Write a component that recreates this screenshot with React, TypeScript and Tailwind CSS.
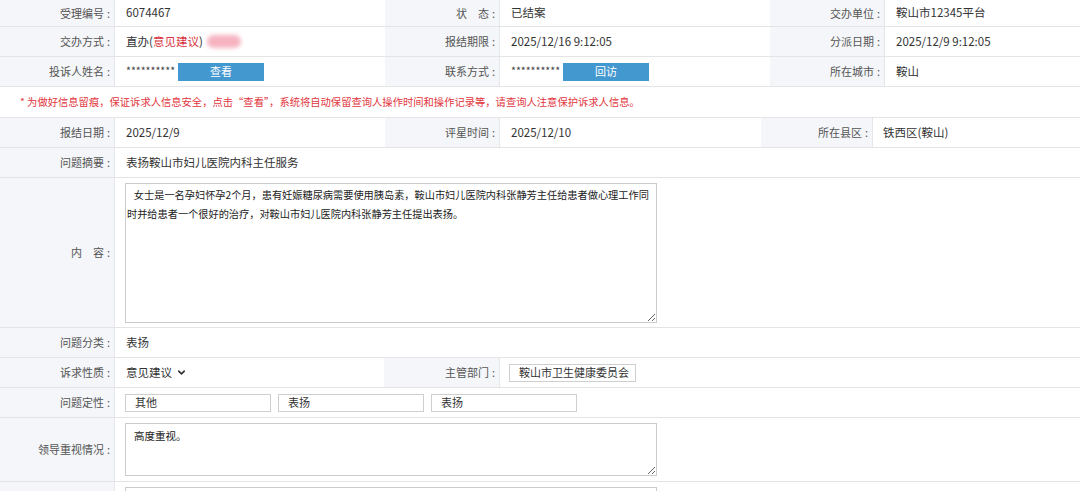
import { ChevronDown } from 'lucide-react'
import type { ReactNode } from 'react'

function Label({ children, w = 'w-[115px]' }: { children?: ReactNode; w?: string }) {
  return (
    <div className={`${w} shrink-0 self-stretch flex items-center justify-end pr-[4px] bg-[#f4f6f9] border-r border-[#e3e6eb] text-[#555] text-[11px]`}>
      {children}
      {children && <span className="ml-[3px]">:</span>}
    </div>
  )
}

function Value({ children, w = 'w-[270px]', pl = 'pl-[11px]' }: { children?: ReactNode; w?: string; pl?: string }) {
  return <div className={`${w} shrink-0 self-stretch flex items-center ${pl} text-[#333]`}>{children}</div>
}

function Row({ children, h = 'h-[30px]' }: { children: ReactNode; h?: string }) {
  return <div className={`flex ${h} border-b border-[#e4e4e4]`}>{children}</div>
}

function Masked() {
  return <span className="inline-block w-[47px] text-[10.5px] text-[#444]">**********</span>
}

function BlueButton({ children }: { children: ReactNode }) {
  return (
    <span className="ml-[5px] inline-flex w-[86px] h-[18px] items-center justify-center bg-[#4398cf] text-white text-[11px]">
      {children}
    </span>
  )
}

function TextInput({ value, w = 'w-[146px]' }: { value: string; w?: string }) {
  return (
    <div className={`${w} h-[18px] border border-[#cfcfcf] bg-white flex items-center pl-[9px] text-[#333] text-[11px]`}>
      {value}
    </div>
  )
}

export default function App() {
  return (
    <div className="w-[1080px] h-[491px] overflow-hidden bg-white font-['Noto_Sans_CJK_SC',sans-serif] text-[11.5px] leading-none">
      <Row h="h-[27px]">
        <Label>受理编号</Label>
        <Value>6074467</Value>
        <Label>状　态</Label>
        <Value>已结案</Value>
        <Label>交办单位</Label>
        <Value w="flex-1">鞍山市12345平台</Value>
      </Row>
      <Row>
        <Label>交办方式</Label>
        <Value>
          直办(<span className="text-[#d8333c]">意见建议</span>)
          <span className="ml-[4px] inline-block w-[34px] h-[13px] rounded-full bg-[#f6b3c0] blur-[2px]" />
        </Value>
        <Label>报结期限</Label>
        <Value>2025/12/16 9:12:05</Value>
        <Label>分派日期</Label>
        <Value w="flex-1">2025/12/9 9:12:05</Value>
      </Row>
      <Row>
        <Label>投诉人姓名</Label>
        <Value>
          <Masked />
          <BlueButton>查看</BlueButton>
        </Value>
        <Label>联系方式</Label>
        <Value>
          <Masked />
          <BlueButton>回访</BlueButton>
        </Value>
        <Label>所在城市</Label>
        <Value w="flex-1">鞍山</Value>
      </Row>
      <div className="flex h-[31px] items-center pl-[20px] border-b border-[#e4e4e4] text-[#e2353d] text-[10.3px]">
        * 为做好信息留痕，保证诉求人信息安全，点击“查看”，系统将自动保留查询人操作时间和操作记录等，请查询人注意保护诉求人信息。
      </div>
      <Row>
        <Label>报结日期</Label>
        <Value>2025/12/9</Value>
        <Label>评星时间</Label>
        <Value w="w-[261px]">2025/12/10</Value>
        <Label w="w-[112px]">所在县区</Label>
        <Value w="flex-1" pl="pl-[10px]">铁西区(鞍山)</Value>
      </Row>
      <Row>
        <Label>问题摘要</Label>
        <Value w="flex-1">表扬鞍山市妇儿医院内科主任服务</Value>
      </Row>
      <Row h="h-[150px]">
        <Label>内　容</Label>
        <div className="flex-1 pl-[10px] pt-[5px]">
          <textarea
            readOnly
            wrap="off"
            className="block w-[532px] h-[140px] overflow-hidden border border-[#cbcbcb] px-[1px] pt-[1px] text-[10.2px] leading-[19px] text-[#222] outline-none"
            value={'   女士是一名孕妇怀孕2个月，患有妊娠糖尿病需要使用胰岛素，鞍山市妇儿医院内科张静芳主任给患者做心理工作同\n时并给患者一个很好的治疗，对鞍山市妇儿医院内科张静芳主任提出表扬。'}
          />
        </div>
      </Row>
      <Row>
        <Label>问题分类</Label>
        <Value w="flex-1">表扬</Value>
      </Row>
      <Row>
        <Label>诉求性质</Label>
        <Value w="w-[269px]">
          意见建议
          <ChevronDown size={11} strokeWidth={3.5} className="ml-[4px] text-[#333]" />
        </Value>
        <Label w="w-[116px]">主管部门</Label>
        <div className="flex-1 flex items-center pl-[9px]">
          <TextInput value="鞍山市卫生健康委员会" w="w-[127px]" />
        </div>
      </Row>
      <Row>
        <Label>问题定性</Label>
        <div className="flex-1 flex items-center pl-[10px] gap-[7px]">
          <TextInput value="其他" />
          <TextInput value="表扬" />
          <TextInput value="表扬" />
        </div>
      </Row>
      <Row h="h-[64px]">
        <Label>领导重视情况</Label>
        <div className="flex-1 pl-[10px] pt-[5px]">
          <textarea
            readOnly
            className="block w-[532px] h-[53px] overflow-hidden border border-[#cbcbcb] pl-[8px] pt-[2px] text-[10.5px] leading-[19px] text-[#222] outline-none"
            value="高度重视。"
          />
        </div>
      </Row>
      <Row h="h-[60px]">
        <Label />
        <div className="flex-1 pl-[10px] pt-[5px]">
          <div className="w-[532px] h-[60px] border border-[#cbcbcb]" />
        </div>
      </Row>
    </div>
  )
}
